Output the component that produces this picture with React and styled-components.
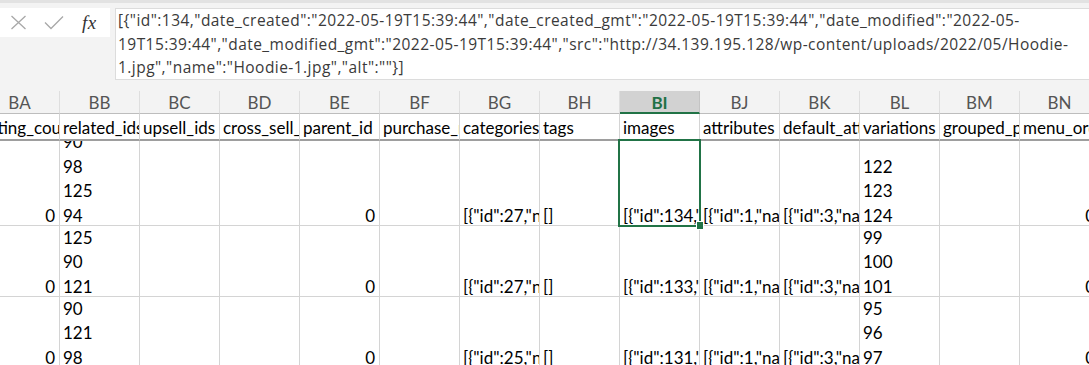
import React from 'react'
import styled, { createGlobalStyle } from 'styled-components'

const GlobalStyle = createGlobalStyle`
	html, body {
		margin: 0;
		padding: 0;
		background: #f3f3f3;
	}
	body {
		width: 1089px;
		height: 365px;
		overflow: hidden;
	}
`

const Window = styled.div`
	width: 1089px;
	height: 365px;
	overflow: hidden;
	background: #f3f3f3;
	border-top: 3px solid #e2e2e2;
	box-sizing: border-box;
	padding-top: 5px;
	display: flex;
	flex-direction: column;
`

const FormulaBar = styled.div`
	display: flex;
	align-items: flex-start;
	gap: 5px;
	height: 72px;
	flex-shrink: 0;
`

const Actions = styled.div`
	width: 110px;
	height: 29px;
	background: #fff;
	display: flex;
	align-items: center;
	padding-left: 10px;
	box-sizing: border-box;
	gap: 17px;
`

const Fx = styled.span`
	font-family: "Liberation Serif", serif;
	font-style: italic;
	font-size: 19px;
	color: #333;
	margin-left: 1px;
	letter-spacing: 0.5px;
`

const FormulaBox = styled.div`
	flex: 1;
	height: 72px;
	background: #fff;
	border: 1px solid #dcdcdc;
	border-right: none;
	box-sizing: border-box;
	padding: 0 0 0 2px;
	font-family: "Open Sans", sans-serif;
	font-size: 15.5px;
	letter-spacing: 0.45px;
	line-height: 23.5px;
	color: #3a3a3a;
	white-space: nowrap;
	overflow: hidden;
`

const FormulaLine = styled.div`
	height: 23.5px;
`

const Sheet = styled.div`
	flex: 1;
	overflow: hidden;
	margin-top: 11px;
`

const Grid = styled.div`
	display: grid;
	grid-template-columns: repeat(14, 80px);
	grid-template-rows: ${p => p.$rows};
	margin-left: -20px;
	font-family: Lato, "Liberation Sans", sans-serif;
	font-size: 17px;
`

const ColHead = styled.div`
	box-sizing: border-box;
	display: flex;
	align-items: center;
	justify-content: center;
	background: ${p => (p.$active ? '#d2d2d2' : '#f3f3f3')};
	color: ${p => (p.$active ? '#1f7145' : '#555')};
	font-weight: ${p => (p.$active ? 700 : 400)};
	border-right: 1px solid ${p => (p.$active ? '#c4c4c4' : '#dedede')};
	border-bottom: ${p => (p.$active ? '2px solid #217346' : '1px solid #bdbdbd')};
	padding-top: 1px;
`

const Cell = styled.div`
	position: relative;
	box-sizing: border-box;
	background: #fff;
	border-right: 1px solid #d4d4d4;
	border-bottom: ${p => (p.$freeze ? '2px solid #9e9e9e' : '1px solid #d4d4d4')};
	color: #000;
`

const Content = styled.div`
	height: 100%;
	overflow: hidden;
	display: flex;
	flex-direction: column;
	justify-content: flex-end;
	align-items: ${p => (p.$right ? 'flex-end' : 'flex-start')};
	padding: ${p => (p.$right ? '0 4px 0 0' : '0 0 0 3px')};
	box-sizing: border-box;
	white-space: nowrap;
`

const Lines = styled.div`
	line-height: 24.5px;
	margin-bottom: ${p => p.$drop}px;
`

const Selection = styled.div`
	position: absolute;
	top: -2px;
	left: -2px;
	right: -2px;
	bottom: -2px;
	border: 2px solid #217346;
	z-index: 2;
	pointer-events: none;
`

const Handle = styled.div`
	position: absolute;
	right: -5px;
	bottom: -5px;
	width: 6px;
	height: 7px;
	background: #217346;
	border: 1px solid #fff;
`

const columns = [
	{ id: 'BA', field: 'rating_count' },
	{ id: 'BB', field: 'related_ids' },
	{ id: 'BC', field: 'upsell_ids' },
	{ id: 'BD', field: 'cross_sell_ids' },
	{ id: 'BE', field: 'parent_id' },
	{ id: 'BF', field: 'purchase_note' },
	{ id: 'BG', field: 'categories' },
	{ id: 'BH', field: 'tags' },
	{ id: 'BI', field: 'images' },
	{ id: 'BJ', field: 'attributes' },
	{ id: 'BK', field: 'default_attributes' },
	{ id: 'BL', field: 'variations' },
	{ id: 'BM', field: 'grouped_products' },
	{ id: 'BN', field: 'menu_order' },
]

const rows = [
	{
		height: 85,
		cells: {
			BA: 0,
			BB: ['90', '98', '125', '94'],
			BE: 0,
			BG: '[{"id":27,"name":"Hoodies","slug":"hoodies"}]',
			BH: '[]',
			BI: '[{"id":134,"date_created":"2022-05-19T15:39:44"}]',
			BJ: '[{"id":1,"name":"Color","position":0}]',
			BK: '[{"id":3,"name":"Logo","option":"Yes"}]',
			BL: ['122', '123', '124'],
			BN: 0,
		},
	},
	{
		height: 71,
		cells: {
			BA: 0,
			BB: ['125', '90', '121'],
			BE: 0,
			BG: '[{"id":27,"name":"Hoodies","slug":"hoodies"}]',
			BH: '[]',
			BI: '[{"id":133,"date_created":"2022-05-19T15:39:43"}]',
			BJ: '[{"id":1,"name":"Color","position":0}]',
			BK: '[{"id":3,"name":"Logo","option":"Yes"}]',
			BL: ['99', '100', '101'],
			BN: 0,
		},
	},
	{
		height: 71,
		cells: {
			BA: 0,
			BB: ['90', '121', '98'],
			BE: 0,
			BG: '[{"id":25,"name":"Accessories","slug":"accessories"}]',
			BH: '[]',
			BI: '[{"id":131,"date_created":"2022-05-19T15:39:42"}]',
			BJ: '[{"id":1,"name":"Color","position":0}]',
			BK: '[{"id":3,"name":"Logo","option":"Yes"}]',
			BL: ['95', '96', '97'],
			BN: 0,
		},
	},
]

const formula = [
	'[{"id":134,"date_created":"2022-05-19T15:39:44","date_created_gmt":"2022-05-19T15:39:44","date_modified":"2022-05-',
	'19T15:39:44","date_modified_gmt":"2022-05-19T15:39:44","src":"http://34.139.195.128/wp-content/uploads/2022/05/Hoodie-',
	'1.jpg","name":"Hoodie-1.jpg","alt":""}]',
]

const CancelIcon = () => (
	<svg width="17" height="15" viewBox="0 0 17 15">
		<path d="M1.5 1 L15.5 14 M15.5 1 L1.5 14" stroke="#a8a8a8" strokeWidth="1.3" fill="none" />
	</svg>
)

const EnterIcon = () => (
	<svg width="20" height="15" viewBox="0 0 20 15">
		<path d="M1 7.5 L7 13.5 L19 1.5" stroke="#a8a8a8" strokeWidth="1.3" fill="none" />
	</svg>
)

const DataCell = ({ value, selected }) => {
	const right = typeof value === 'number'
	const lines = value === undefined ? [] : Array.isArray(value) ? value : [String(value)]
	return (
		<Cell>
			<Content $right={right}>
				<Lines $drop={-3}>
					{lines.map((line, i) => (
						<div key={i}>{line}</div>
					))}
				</Lines>
			</Content>
			{selected && (
				<Selection>
					<Handle />
				</Selection>
			)}
		</Cell>
	)
}

const App = () => (
	<Window>
		<GlobalStyle />
		<FormulaBar>
			<Actions>
				<CancelIcon />
				<EnterIcon />
				<Fx>fx</Fx>
			</Actions>
			<FormulaBox>
				{formula.map((line, i) => (
					<FormulaLine key={i}>{line}</FormulaLine>
				))}
			</FormulaBox>
		</FormulaBar>
		<Sheet>
			<Grid $rows={'23px 27px ' + rows.map(r => r.height + 'px').join(' ')}>
				{columns.map(col => (
					<ColHead key={col.id} $active={col.id === 'BI'}>{col.id}</ColHead>
				))}
				{columns.map(col => (
					<Cell key={col.id} $freeze>
						<Content>
							<Lines $drop={-1}>{col.field}</Lines>
						</Content>
					</Cell>
				))}
				{rows.map((row, r) =>
					columns.map(col => (
						<DataCell
							key={r + col.id}
							value={row.cells[col.id]}
							selected={r === 0 && col.id === 'BI'}
						/>
					))
				)}
			</Grid>
		</Sheet>
	</Window>
)

export default App
